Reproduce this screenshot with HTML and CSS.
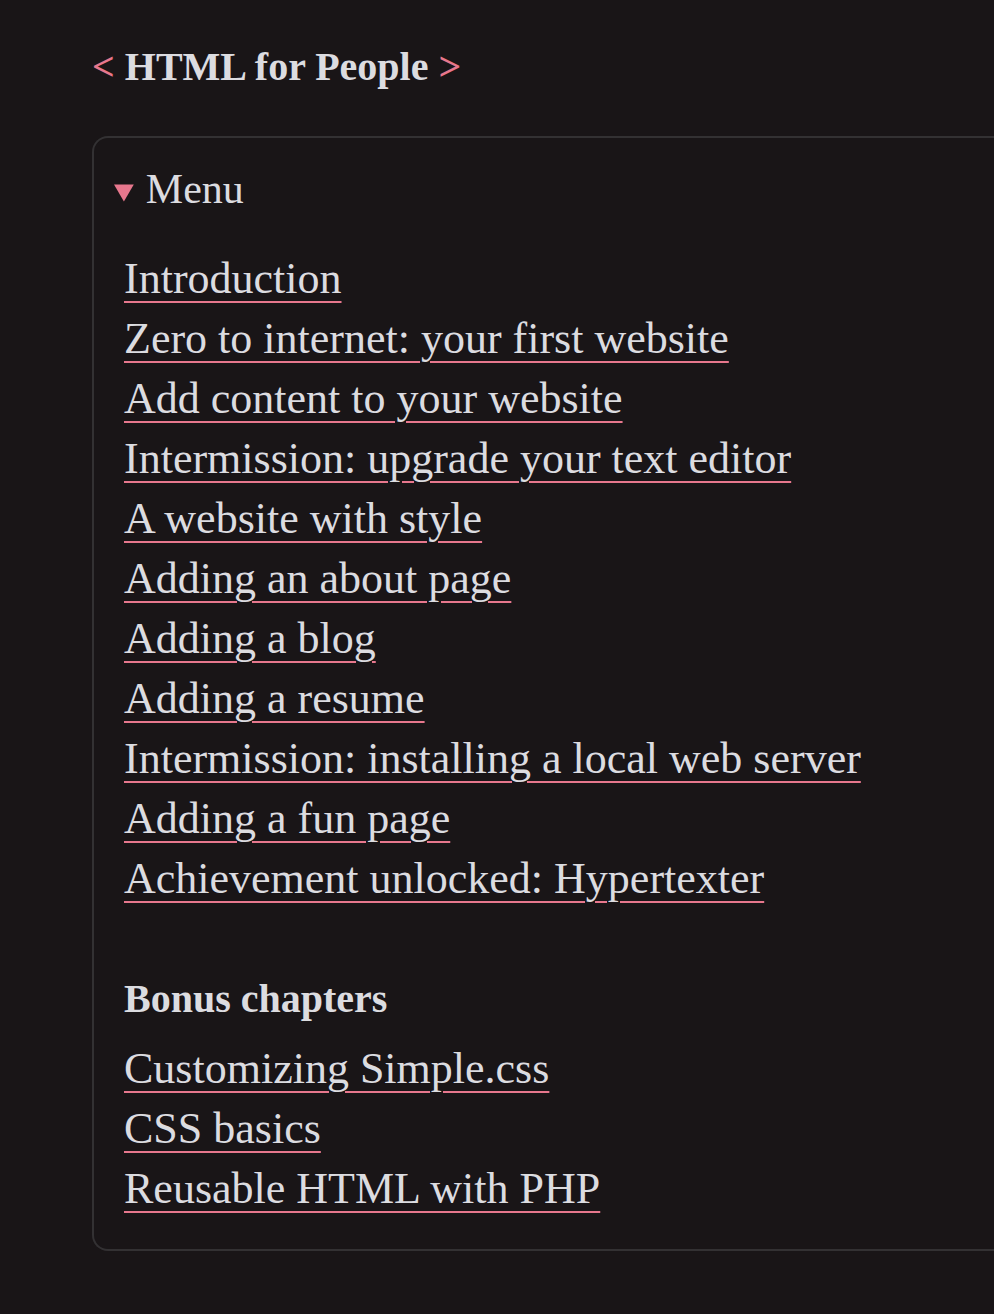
FILE: index.html
```html
<!DOCTYPE html>
<html lang="en">
<head>
<meta charset="utf-8">
<title>HTML for People</title>
<link rel="stylesheet" href="styles.css">
</head>
<body>
<header class="site-header">
  <h1 class="site-title"><span class="bracket">&lt;</span> HTML for People <span class="bracket">&gt;</span></h1>
</header>
<details class="menu" open>
  <summary class="menu-summary">Menu</summary>
  <nav class="menu-list">
    <a class="menu-link" href="#">Introduction</a>
    <a class="menu-link" href="#">Zero to internet: your first website</a>
    <a class="menu-link" href="#">Add content to your website</a>
    <a class="menu-link" href="#">Intermission: upgrade your text editor</a>
    <a class="menu-link" href="#">A website with style</a>
    <a class="menu-link" href="#">Adding an about page</a>
    <a class="menu-link" href="#">Adding a blog</a>
    <a class="menu-link" href="#">Adding a resume</a>
    <a class="menu-link" href="#">Intermission: installing a local web server</a>
    <a class="menu-link" href="#">Adding a fun page</a>
    <a class="menu-link" href="#">Achievement unlocked: Hypertexter</a>
    <p class="menu-heading">Bonus chapters</p>
    <a class="menu-link" href="#">Customizing Simple.css</a>
    <a class="menu-link" href="#">CSS basics</a>
    <a class="menu-link" href="#">Reusable HTML with PHP</a>
  </nav>
</details>
</body>
</html>
```

FILE: styles.css
```css
html {
  background: #191517;
}
body {
  margin: 0;
  padding: 0 0 0 92px;
  overflow: hidden;
  background: #191517;
  color: #dcdce0;
  font-family: "Liberation Serif", "DejaVu Serif", serif;
}
.site-header {
  padding-top: 37px;
}
.site-title {
  margin: 0;
  font-size: 40px;
  line-height: 60px;
  font-weight: bold;
  color: #dcdce0;
}
.bracket {
  color: #e7778d;
}
.menu {
  margin-top: 39px;
  width: 920px;
  border: 2px solid #333133;
  border-right: none;
  border-radius: 16px 0 0 16px;
  padding: 28px 0 30px 20px;
}
.menu-summary {
  font-size: 42px;
  line-height: 46px;
  cursor: pointer;
  color: #dcdce0;
}
.menu-summary::marker {
  color: #e7778d;
  font-size: 30px;
}
.menu-list {
  display: flex;
  flex-direction: column;
  align-items: flex-start;
  padding-left: 10px;
  margin-top: 33px;
}
.menu-link {
  font-size: 44px;
  line-height: 60px;
  color: #dcdce0;
  text-decoration: underline;
  text-decoration-color: #e7778d;
  text-decoration-thickness: 2px;
  text-underline-offset: 8px;
}
.menu-heading {
  margin: 60px 0 10px;
  font-size: 40px;
  line-height: 60px;
  font-weight: bold;
}
```
